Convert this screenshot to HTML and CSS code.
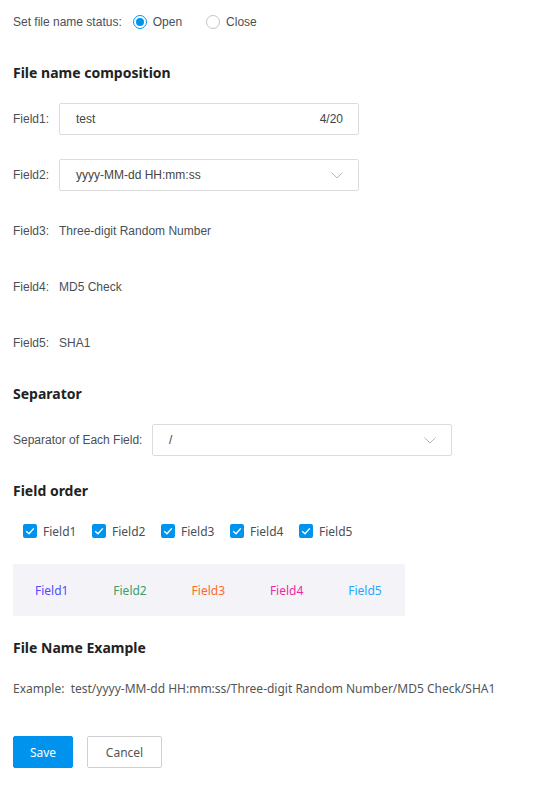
FILE: index.html
```html
<!DOCTYPE html>
<html>
<head>
<meta charset="utf-8">
<link rel="stylesheet" href="styles.css">
</head>
<body>
<div class="page">
  <div class="row status-row">
    <span class="status-label">Set file name status:</span>
    <span class="radio checked"><span class="dot"></span></span>
    <span class="radio-text">Open</span>
    <span class="radio"><span class="dot"></span></span>
    <span class="radio-text">Close</span>
  </div>

  <h2 class="heading h-comp">File name composition</h2>

  <div class="row field-row first">
    <span class="label">Field1:</span>
    <div class="input">
      <span class="value">test</span>
      <span class="count">4/20</span>
    </div>
  </div>
  <div class="row field-row">
    <span class="label">Field2:</span>
    <div class="input">
      <span class="value">yyyy-MM-dd HH:mm:ss</span>
      <svg class="chev" width="12" height="7" viewBox="0 0 12 7"><path d="M0.5 0.5 L6 6 L11.5 0.5" fill="none" stroke="#b8b8b8" stroke-width="1"/></svg>
    </div>
  </div>
  <div class="row field-row">
    <span class="label">Field3:</span>
    <span class="text">Three-digit Random Number</span>
  </div>
  <div class="row field-row">
    <span class="label">Field4:</span>
    <span class="text">MD5 Check</span>
  </div>
  <div class="row field-row">
    <span class="label">Field5:</span>
    <span class="text">SHA1</span>
  </div>

  <h2 class="heading h-sep">Separator</h2>
  <div class="row field-row first">
    <span class="label sep-label">Separator of Each Field:</span>
    <div class="input">
      <span class="value">/</span>
      <svg class="chev" width="12" height="7" viewBox="0 0 12 7"><path d="M0.5 0.5 L6 6 L11.5 0.5" fill="none" stroke="#b8b8b8" stroke-width="1"/></svg>
    </div>
  </div>

  <h2 class="heading h-order">Field order</h2>
  <div class="row checks">
    <label class="check"><span class="box"><svg width="14" height="14" viewBox="0 0 14 14"><path d="M3.2 7.2 L6 9.8 L10.8 4.4" fill="none" stroke="#fff" stroke-width="1.4"/></svg></span>Field1</label>
    <label class="check"><span class="box"><svg width="14" height="14" viewBox="0 0 14 14"><path d="M3.2 7.2 L6 9.8 L10.8 4.4" fill="none" stroke="#fff" stroke-width="1.4"/></svg></span>Field2</label>
    <label class="check"><span class="box"><svg width="14" height="14" viewBox="0 0 14 14"><path d="M3.2 7.2 L6 9.8 L10.8 4.4" fill="none" stroke="#fff" stroke-width="1.4"/></svg></span>Field3</label>
    <label class="check"><span class="box"><svg width="14" height="14" viewBox="0 0 14 14"><path d="M3.2 7.2 L6 9.8 L10.8 4.4" fill="none" stroke="#fff" stroke-width="1.4"/></svg></span>Field4</label>
    <label class="check"><span class="box"><svg width="14" height="14" viewBox="0 0 14 14"><path d="M3.2 7.2 L6 9.8 L10.8 4.4" fill="none" stroke="#fff" stroke-width="1.4"/></svg></span>Field5</label>
  </div>
  <div class="order-box">
    <span class="tag c1">Field1</span>
    <span class="tag c2">Field2</span>
    <span class="tag c3">Field3</span>
    <span class="tag c4">Field4</span>
    <span class="tag c5">Field5</span>
  </div>

  <h2 class="heading h-ex">File Name Example</h2>
  <div class="row example">Example:&nbsp;&nbsp;test/yyyy-MM-dd HH:mm:ss/Three-digit Random Number/MD5 Check/SHA1</div>

  <div class="buttons">
    <button class="btn primary">Save</button>
    <button class="btn">Cancel</button>
  </div>
</div>
</body>
</html>
```

FILE: styles.css
```css
* { box-sizing: border-box; }
body {
  margin: 0;
  background: #fff;
  font-family: "Liberation Sans", Arial, sans-serif;
  font-size: 12px;
  color: #4a4f57;
}
.page {
  padding: 6px 13px 0 13px;
}
.row {
  display: flex;
  align-items: center;
  height: 32px;
}
.status-label { margin-right: 11px; }
.radio {
  width: 14px;
  height: 14px;
  border: 1px solid #c4c4c4;
  border-radius: 50%;
  display: flex;
  align-items: center;
  justify-content: center;
  margin-right: 6px;
}
.radio.checked { border-color: #0093ee; }
.radio.checked .dot {
  width: 8px;
  height: 8px;
  border-radius: 50%;
  background: #0093ee;
}
.radio-text { margin-right: 24px; }

.heading {
  margin: 0;
  font-family: "Noto Sans", sans-serif;
  font-weight: bold;
  font-size: 14px;
  line-height: 22px;
  height: 22px;
  color: #222;
}
.h-comp { margin-top: 24px; }
.h-sep, .h-order { margin-top: 24px; }
.h-ex { margin-top: 21px; }

.field-row { margin-top: 24px; }
.field-row.first { margin-top: 19px; }
.label { width: 46px; flex: none; }
.sep-label { width: 139px; }
.input {
  width: 300px;
  height: 32px;
  border: 1px solid #dcdcdc;
  border-radius: 2px;
  display: flex;
  align-items: center;
  justify-content: space-between;
  padding: 0 15px 0 16px;
  color: #444;
}

.checks {
  margin-top: 13px;
  padding-left: 10px;
  font-family: "Noto Sans", sans-serif;
}
.check {
  display: flex;
  align-items: center;
  width: 69px;
  flex: none;
  color: #4a4f57;
}
.box {
  width: 14px;
  height: 14px;
  background: #0093ee;
  border-radius: 2px;
  margin-right: 6px;
  display: flex;
}
.order-box {
  margin-top: 17px;
  width: 392px;
  height: 52px;
  background: #f4f4f8;
  display: flex;
  align-items: center;
  padding-left: 22px;
  font-family: "Noto Sans", sans-serif;
}
.tag { width: 78.3px; flex: none; }
.c1 { color: #4d4dff; }
.c2 { color: #3a9e6a; }
.c3 { color: #ff6a2b; }
.c4 { color: #ee2aa3; }
.c5 { color: #22a7ff; }

.example {
  margin-top: 13px;
  font-family: "Noto Sans", sans-serif;
  color: #555;
}
.buttons {
  margin-top: 32px;
  display: flex;
  gap: 14px;
}
.btn {
  height: 32px;
  padding: 0;
  border: 1px solid #d0d0d0;
  background: #fff;
  border-radius: 2px;
  font-family: "Noto Sans", sans-serif;
  font-size: 12px;
  color: #555;
  width: 75px;
}
.btn.primary {
  width: 60px;
  background: #0093ee;
  border-color: #0093ee;
  color: #fff;
}
```
